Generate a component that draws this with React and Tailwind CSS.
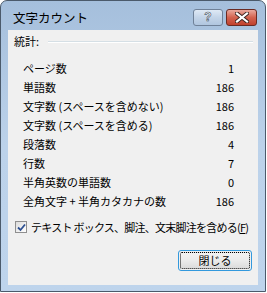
import React from "react";

const rows = [
  ["ページ数", "1"],
  ["単語数", "186"],
  ["文字数 (スペースを含めない)", "186"],
  ["文字数 (スペースを含める)", "186"],
  ["段落数", "4"],
  ["行数", "7"],
  ["半角英数の単語数", "0"],
  ["全角文字 + 半角カタカナの数", "186"],
];

const jp = { fontFamily: '"Noto Sans CJK JP", "Noto Sans", sans-serif' };

function Check() {
  return (
    <div className="w-[12px] h-[12px] border border-[#8f8f8f] bg-gradient-to-br from-[#dcdcdc] to-white flex items-center justify-center">
      <svg width="9" height="9" viewBox="0 0 9 9">
        <path d="M1 4.5 L3.5 7 L8 1.5" fill="none" stroke="#2c4f91" strokeWidth="1.8" />
      </svg>
    </div>
  );
}

export default function App() {
  return (
    <div className="w-[267px] h-[293px] bg-white overflow-hidden" style={jp}>
      <div className="w-[266px] h-[292px] border border-[#4b5a6b] rounded-t-[7px] bg-gradient-to-b from-[#a5bfdc] via-[#bcd2ea] to-[#bed4ec] flex flex-col px-[7px] pb-[6px]">
        <div className="h-[29px] flex items-center justify-between">
          <span className="text-[12.5px] text-black pl-[5px] pt-[6px]">文字カウント</span>
          <div className="flex gap-[3px] pt-[3px] pr-[1px]">
            <div className="w-[30px] h-[17px] rounded-[3px] border border-[#6f8198] bg-gradient-to-b from-[#dfe9f5] via-[#c3d4e8] to-[#b0c6df] flex items-center justify-center">
              <span className="text-[12px] font-bold text-white leading-none" style={{ fontFamily: '"Liberation Sans", sans-serif', WebkitTextStroke: "0.6px #3b4a5c" }}>?</span>
            </div>
            <div className="w-[31px] h-[17px] rounded-[3px] border border-[#6a2a22] bg-gradient-to-b from-[#e9a89e] via-[#d3624f] to-[#c0402c] flex items-center justify-center">
              <svg width="14" height="11" viewBox="0 0 14 11">
                <path d="M2 1.5 L12 9.5 M12 1.5 L2 9.5" stroke="#3a2220" strokeWidth="4" strokeLinecap="square" />
                <path d="M2 1.5 L12 9.5 M12 1.5 L2 9.5" stroke="#ffffff" strokeWidth="2.2" strokeLinecap="square" />
              </svg>
            </div>
          </div>
        </div>
        <div className="flex-1 bg-[#f0f0f0] flex flex-col text-[11px] text-black">
          <div className="flex items-center h-[19px] mt-[2px] pl-[6px] pr-[5px]">
            <span>統計:</span>
            <div className="flex-1 ml-[9px] mt-[1px] border-t border-[#d5dfe5] border-b-white border-b" />
          </div>
          <div className="flex flex-col mt-[8px] pl-[15px] pr-[24px]">
            {rows.map(([k, v]) => (
              <div key={k} className="flex justify-between items-center h-[19px]">
                <span>{k}</span>
                <span>{v}</span>
              </div>
            ))}
          </div>
          <div className="flex items-center gap-[4px] mt-[8px] pl-[7px] h-[16px]">
            <Check />
            <span className="tracking-[-0.75px]">テキスト ボックス、脚注、文末脚注を含める(<span className="underline">F</span>)</span>
          </div>
          <div className="flex justify-end pr-[6px] mt-[15px]">
            <div className="w-[74px] h-[21px] rounded-[3px] border border-[#3399dd] p-[1px]">
              <div className="w-full h-full rounded-[2px] bg-gradient-to-b from-[#f2f2f2] via-[#ebebeb] to-[#dcdcdc] border border-dotted border-black flex items-center justify-center">
                <span>閉じる</span>
              </div>
            </div>
          </div>
        </div>
      </div>
    </div>
  );
}
